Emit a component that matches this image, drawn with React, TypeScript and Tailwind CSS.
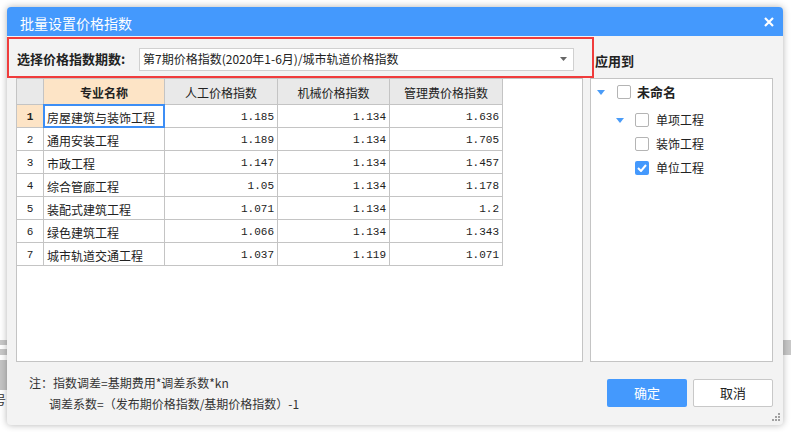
import React from "react";

const rows: [string, string, string, string][] = [
  ["房屋建筑与装饰工程", "1.185", "1.134", "1.636"],
  ["通用安装工程", "1.189", "1.134", "1.705"],
  ["市政工程", "1.147", "1.134", "1.457"],
  ["综合管廊工程", "1.05", "1.134", "1.178"],
  ["装配式建筑工程", "1.071", "1.134", "1.2"],
  ["绿色建筑工程", "1.066", "1.134", "1.343"],
  ["城市轨道交通工程", "1.037", "1.119", "1.071"],
];

function Tri() {
  return (
    <svg width="8" height="5" viewBox="0 0 8 5" className="shrink-0">
      <polygon points="0,0 8,0 4,5" fill="#4a9cf8" />
    </svg>
  );
}

function Box({ checked }: { checked?: boolean }) {
  if (checked)
    return (
      <div className="w-[14px] h-[14px] rounded-[2px] bg-[#4499fd] flex items-center justify-center shrink-0">
        <svg width="10" height="8" viewBox="0 0 10 8">
          <path d="M1 4 L4 7 L9 1" stroke="#fff" strokeWidth="2" fill="none" />
        </svg>
      </div>
    );
  return <div className="w-[14px] h-[14px] rounded-[2px] border border-[#b4b4b4] bg-white shrink-0" />;
}

export default function App() {
  const mono = "font-['Liberation_Mono','DejaVu_Sans_Mono',monospace]";
  return (
    <div className="relative w-[791px] h-[432px] bg-white overflow-hidden font-['Noto_Sans_CJK_SC','Noto_Sans',sans-serif] text-[#222]">
      {/* background app fragments */}
      <div className="absolute left-0 top-[340px] w-[8px] h-[5px] bg-[#c8c8c8]" />
      <div className="absolute left-0 top-[349px] w-[8px] h-[6px] bg-[#c8c8c8]" />
      <div className="absolute left-0 top-[360px] w-[8px] h-[30px] bg-[#c4c4c4]" />
      <div className="absolute left-0 top-[392px] w-[7px] overflow-hidden text-[12px] leading-[16px] text-[#333]">
        <span className="block -ml-[6px]">号</span>
      </div>
      <div className="absolute right-0 top-[340px] w-[8px] h-[15px] bg-[#c8c8c8]" />

      {/* dialog */}
      <div className="relative ml-[7px] mt-[7px] w-[776px] h-[418px] bg-[#f3f3f3] rounded-[4px] shadow-[0_0_7px_rgba(0,0,0,0.3)] flex flex-col">
        {/* title bar */}
        <div className="h-[29px] bg-[#4499fd] rounded-t-[4px] flex items-center justify-between pl-[13px] pr-[9px] shrink-0">
          <span className="text-white text-[14px] leading-[14px] mt-[2px]">批量设置价格指数</span>
          <svg width="10" height="10" viewBox="0 0 10 10">
            <path d="M1 1 L9 9 M9 1 L1 9" stroke="#fff" strokeWidth="2.2" />
          </svg>
        </div>

        {/* top row */}
        <div className="h-[42px] flex items-center pt-[4px] shrink-0">
          <div className="w-[580px] flex items-center pl-[10px]">
            <span className="text-[13px] font-bold w-[122px]">选择价格指数期数:</span>
            <div className="w-[435px] h-[23px] bg-white border border-[#d0d0d0] flex items-center justify-between pl-[3px] pr-[6px]">
              <span className="text-[12px]">第7期价格指数(2020年1-6月)/城市轨道价格指数</span>
              <svg width="7" height="4" viewBox="0 0 7 4">
                <polygon points="0,0 7,0 3.5,4" fill="#666" />
              </svg>
            </div>
          </div>
          <span className="ml-[8px] text-[13px] font-bold mt-[4px]">应用到</span>
        </div>

        {/* panels */}
        <div className="h-[284px] flex pl-[9px] gap-[7px] shrink-0">
          <div className="w-[567px] bg-white border border-[#c4c4c4]">
            {/* header */}
            <div className="flex h-[26px] text-[12px]">
              <div className="w-[27px] bg-[#e9e9e9] border-r border-b border-[#c4c4c4]" />
              <div className="w-[121px] bg-[#fde4c6] border-r border-b border-[#c4c4c4] flex items-center justify-center pt-[3px] font-bold">专业名称</div>
              <div className="w-[113px] bg-[#e9e9e9] border-r border-b border-[#c4c4c4] flex items-center justify-center pt-[3px]">人工价格指数</div>
              <div className="w-[112px] bg-[#e9e9e9] border-r border-b border-[#c4c4c4] flex items-center justify-center pt-[3px]">机械价格指数</div>
              <div className="w-[113px] bg-[#e9e9e9] border-r border-b border-[#c4c4c4] flex items-center justify-center pt-[3px]">管理费价格指数</div>
            </div>
            {rows.map((r, i) => (
              <div key={i} className="flex h-[23px] text-[12px]">
                <div
                  className={
                    "w-[27px] border-r border-b border-[#c4c4c4] flex items-center justify-center pt-[3px] text-[11px] " +
                    mono +
                    (i === 0 ? " bg-[#fde4c6] font-bold" : "")
                  }
                >
                  {i + 1}
                </div>
                <div className="relative w-[121px] border-r border-b border-[#c4c4c4] flex items-center pl-[3px] pt-[3px]">
                  {r[0]}
                  {i === 0 && <div className="absolute left-[-1px] top-[-1px] right-[-1px] bottom-[-1px] border-2 border-[#3d8ef5]" />}
                </div>
                <div className={"w-[113px] border-r border-b border-[#c4c4c4] flex items-center justify-end pr-[3px] pt-[3px] text-[11px] " + mono}>{r[1]}</div>
                <div className={"w-[112px] border-r border-b border-[#c4c4c4] flex items-center justify-end pr-[3px] pt-[3px] text-[11px] " + mono}>{r[2]}</div>
                <div className={"w-[113px] border-r border-b border-[#c4c4c4] flex items-center justify-end pr-[3px] pt-[3px] text-[11px] " + mono}>{r[3]}</div>
              </div>
            ))}
          </div>

          <div className="w-[183px] bg-white border border-[#c4c4c4] text-[12px]">
            <div className="mt-[1px] h-[24px] flex items-center pl-[6px]">
              <div className="w-[20px]"><Tri /></div>
              <Box />
              <span className="ml-[6px] font-bold text-[13px]">未命名</span>
            </div>
            <div className="mt-[4px] h-[24px] flex items-center pl-[25px]">
              <div className="w-[19px]"><Tri /></div>
              <Box />
              <span className="ml-[7px]">单项工程</span>
            </div>
            <div className="h-[24px] flex items-center pl-[44px]">
              <Box />
              <span className="ml-[7px]">装饰工程</span>
            </div>
            <div className="h-[24px] flex items-center pl-[44px]">
              <Box checked />
              <span className="ml-[7px]">单位工程</span>
            </div>
          </div>
        </div>

        {/* bottom */}
        <div className="flex-1 flex items-start justify-between pt-[10px] pr-[10px]">
          <div className="pl-[22px] text-[12px] leading-[21px] text-[#333]">
            <div>注：指数调差=基期费用*调差系数*kn</div>
            <div className="pl-[20px]">调差系数=（发布期价格指数/基期价格指数）-1</div>
          </div>
          <div className="flex gap-[6px] mt-[7px]">
            <div className="w-[80px] h-[28px] bg-[#4499fd] rounded-[2px] text-white text-[13px] flex items-center justify-center">确定</div>
            <div className="w-[80px] h-[28px] bg-white border border-[#c8c8c8] rounded-[2px] text-[13px] flex items-center justify-center">取消</div>
          </div>
        </div>

        {/* resize grip */}
        <svg className="absolute right-[3px] bottom-[4px]" width="8" height="8" viewBox="0 0 8 8">
          <rect x="6" y="0" width="2" height="2" fill="#a0a0a0" />
          <rect x="3" y="3" width="2" height="2" fill="#a0a0a0" />
          <rect x="6" y="3" width="2" height="2" fill="#a0a0a0" />
          <rect x="0" y="6" width="2" height="2" fill="#a0a0a0" />
          <rect x="3" y="6" width="2" height="2" fill="#a0a0a0" />
          <rect x="6" y="6" width="2" height="2" fill="#a0a0a0" />
        </svg>

        {/* red annotation box */}
        <div className="absolute left-0 top-[30px] w-[587px] h-[41px] border-[2.5px] border-[#f03c3c]" />
      </div>
    </div>
  );
}
